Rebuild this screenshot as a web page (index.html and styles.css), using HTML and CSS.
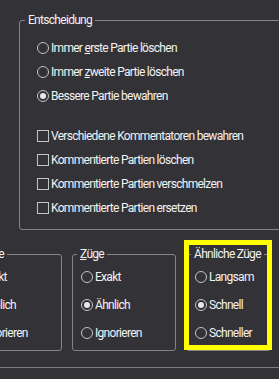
FILE: index.html
```html
<!DOCTYPE html>
<html lang="de">
<head>
    <meta charset="UTF-8">
    <meta name="viewport" content="width=device-width, initial-scale=1.0">
    <title>Doubletten</title>
    <link rel="stylesheet" href="styles.css">
</head>
<body>
    <div class="dialog">
        <fieldset class="group main">
            <legend>Entscheidung</legend>
            <div class="options">
                <label class="opt"><span class="radio"></span><span>Immer <u>e</u>rste Partie löschen</span></label>
                <label class="opt"><span class="radio"></span><span>Immer <u>z</u>weite Partie löschen</span></label>
                <label class="opt"><span class="radio on"></span><span>Bessere Partie bewahren</span></label>
            </div>
            <div class="options checks">
                <label class="opt"><span class="check"></span><span>Verschiedene Kommentatoren bewahren</span></label>
                <label class="opt"><span class="check"></span><span>Kommentierte Partien löschen</span></label>
                <label class="opt"><span class="check"></span><span>Kommentierte Partien verschmelzen</span></label>
                <label class="opt"><span class="check"></span><span>Kommentierte Partien ersetzen</span></label>
            </div>
        </fieldset>

        <div class="row">
            <fieldset class="group small">
                <legend>Turniere</legend>
                <div class="options">
                    <label class="opt"><span class="radio"></span><span>Exakt</span></label>
                    <label class="opt"><span class="radio on"></span><span>Ähnlich</span></label>
                    <label class="opt"><span class="radio"></span><span>Ignorieren</span></label>
                </div>
            </fieldset>
            <fieldset class="group small">
                <legend><u>Z</u>üge</legend>
                <div class="options">
                    <label class="opt"><span class="radio"></span><span>Exakt</span></label>
                    <label class="opt"><span class="radio on"></span><span>Ähnlich</span></label>
                    <label class="opt"><span class="radio"></span><span>Ignorieren</span></label>
                </div>
            </fieldset>
            <div class="mark">
                <fieldset class="group small narrow">
                    <legend>Ähnliche Züge</legend>
                    <div class="options">
                        <label class="opt"><span class="radio"></span><span>Langsam</span></label>
                        <label class="opt"><span class="radio on"></span><span>Schnell</span></label>
                        <label class="opt"><span class="radio"></span><span>Schneller</span></label>
                    </div>
                </fieldset>
            </div>
        </div>

        <div class="separator"></div>
    </div>
</body>
</html>
```

FILE: styles.css
```css
body {
    margin: 0;
    width: 279px;
    height: 379px;
    overflow: hidden;
    background-color: #333337;
    color: #f2f2f2;
    font-family: Roboto, "Liberation Sans", Arial, sans-serif;
    font-size: 12px;
    letter-spacing: -0.7px;
}
.group {
    margin: 0;
    padding: 0 0 0 5px;
    min-width: 0;
    border: 1px solid #858585;
    border-radius: 3px;
}
legend {
    padding: 0 3px;
    line-height: 14px;
    white-space: nowrap;
}
.main {
    margin: 13px 0 0 19px;
    width: 320px;
    padding-bottom: 9px;
}
.options {
    padding: 9px 0 0 12px;
}
.checks {
    margin-top: 16px;
    padding-top: 0;
}
.opt {
    display: flex;
    align-items: center;
    height: 24px;
    white-space: nowrap;
}
.radio,
.check {
    flex: none;
    display: flex;
    align-items: center;
    justify-content: center;
    box-sizing: border-box;
    width: 12px;
    height: 12px;
    margin-right: 2px;
    border: 1px solid #c4c4c4;
}
.radio {
    border-radius: 50%;
}
.radio.on::after {
    content: "";
    width: 6px;
    height: 6px;
    border-radius: 50%;
    background: #e8e8e8;
}
.row {
    display: flex;
    gap: 10px;
    margin: 17px 0 0 -42px;
}
.small {
    flex: none;
    box-sizing: border-box;
    width: 104px;
    padding: 0 0 3px 4px;
}
.small .options {
    padding: 2px 0 0 4px;
}
.small .opt {
    height: 28px;
}
.mark {
    position: relative;
    flex: none;
}
.narrow {
    width: 85px;
}
.mark::after {
    content: "";
    position: absolute;
    top: -7px;
    left: -2px;
    right: -1px;
    bottom: 1px;
    border: 5px solid #ffff00;
}
.separator {
    margin-top: 16px;
    border-top: 1px solid #7d7d7d;
}
```
